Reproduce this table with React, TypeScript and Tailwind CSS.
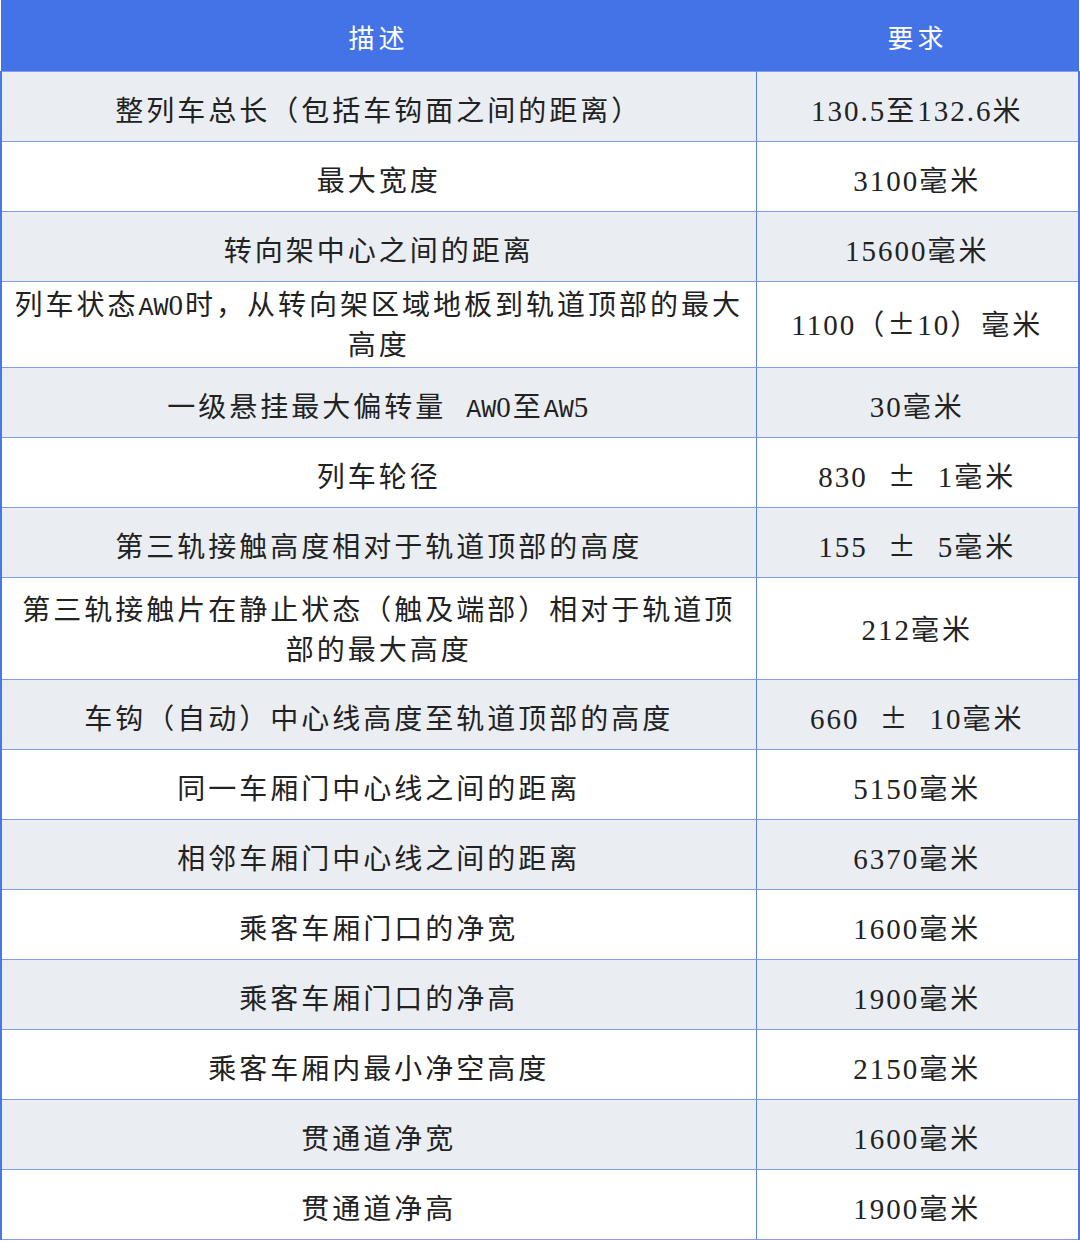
const rows: { desc: string[]; req: string; h?: string; pt?: string }[] = [
  { desc: ["整列车总长（包括车钩面之间的距离）"], req: "130.5至132.6米" },
  { desc: ["最大宽度"], req: "3100毫米" },
  { desc: ["转向架中心之间的距离"], req: "15600毫米" },
  { desc: ["列车状态AW0时，从转向架区域地板到轨道顶部的最大", "高度"], req: "1100（±10）毫米", h: "h-[86px]", pt: "pt-[4px]" },
  { desc: ["一级悬挂最大偏转量 AW0至AW5"], req: "30毫米" },
  { desc: ["列车轮径"], req: "830 ± 1毫米" },
  { desc: ["第三轨接触高度相对于轨道顶部的高度"], req: "155 ± 5毫米" },
  { desc: ["第三轨接触片在静止状态（触及端部）相对于轨道顶", "部的最大高度"], req: "212毫米", h: "h-[102px]", pt: "pt-[6px]" },
  { desc: ["车钩（自动）中心线高度至轨道顶部的高度"], req: "660 ± 10毫米" },
  { desc: ["同一车厢门中心线之间的距离"], req: "5150毫米" },
  { desc: ["相邻车厢门中心线之间的距离"], req: "6370毫米" },
  { desc: ["乘客车厢门口的净宽"], req: "1600毫米" },
  { desc: ["乘客车厢门口的净高"], req: "1900毫米" },
  { desc: ["乘客车厢内最小净空高度"], req: "2150毫米" },
  { desc: ["贯通道净宽"], req: "1600毫米" },
  { desc: ["贯通道净高"], req: "1900毫米" },
];

// latin runs get tighter spacing than the CJK characters
function Spaced({ text }: { text: string }) {
  const parts = text.match(/[A-Z]+|[0-9.]+|±|[^A-Z0-9.±]+/g) ?? [];
  return (
    <>
      {parts.map((p, i) => {
        if (p === "±")
          return (
            <span key={i} className="tracking-[2px] leading-none font-['Noto_Sans_CJK_SC']">±</span>
          );
        if (/^[A-Z]/.test(p))
          return (
            <span key={i} className="font-['Liberation_Mono'] text-[25px] leading-none tracking-[0px]">{p}</span>
          );
        if (/^[0-9.]/.test(p))
          return (
            <span key={i} className="tracking-[2px] text-[29px] leading-none">{p}</span>
          );
        return (
          <span key={i} className="tracking-[3px]">{p.replace(/ /g, "\u00a0\u00a0")}</span>
        );
      })}
    </>
  );
}

export default function App() {
  return (
    <div
      className="w-[1080px] bg-white"
      style={{ fontFamily: '"Liberation Serif", "Noto Sans CJK SC", serif' }}
    >
      <table className="w-[1080px] table-fixed border-collapse text-[28px] text-[#222]">
        <colgroup>
          <col className="w-[755px]" />
          <col />
        </colgroup>
        <thead>
          <tr className="h-[71px] bg-[#4473e8] text-white">
            <th className="font-normal tracking-[4px] text-[26px] pt-2">描述</th>
            <th className="font-normal tracking-[4px] text-[26px] pt-2">要求</th>
          </tr>
        </thead>
        <tbody>
          {rows.map((r, i) => (
            <tr
              key={i}
              className={`${r.h ?? "h-[70px]"} ${i % 2 === 0 ? "bg-[#eaeef2]" : "bg-white"}`}
            >
              <td className={`${r.pt ?? "pt-3"} border-t border-b border-l-2 border-r border-t-[#7f9eec] border-b-[#7f9eec] border-l-[#4a77e6] border-r-[#5b81e8] px-0 text-center leading-[40px] whitespace-nowrap`}>
                {r.desc.map((line, j) => (
                  <div key={j}>
                    <Spaced text={line} />
                  </div>
                ))}
              </td>
              <td className={`${r.pt ?? "pt-3"} border-t border-b border-r-2 border-t-[#7f9eec] border-b-[#7f9eec] border-r-[#4a77e6] px-2 text-center leading-[40px] whitespace-nowrap`}>
                <Spaced text={r.req} />
              </td>
            </tr>
          ))}
        </tbody>
      </table>
    </div>
  );
}
